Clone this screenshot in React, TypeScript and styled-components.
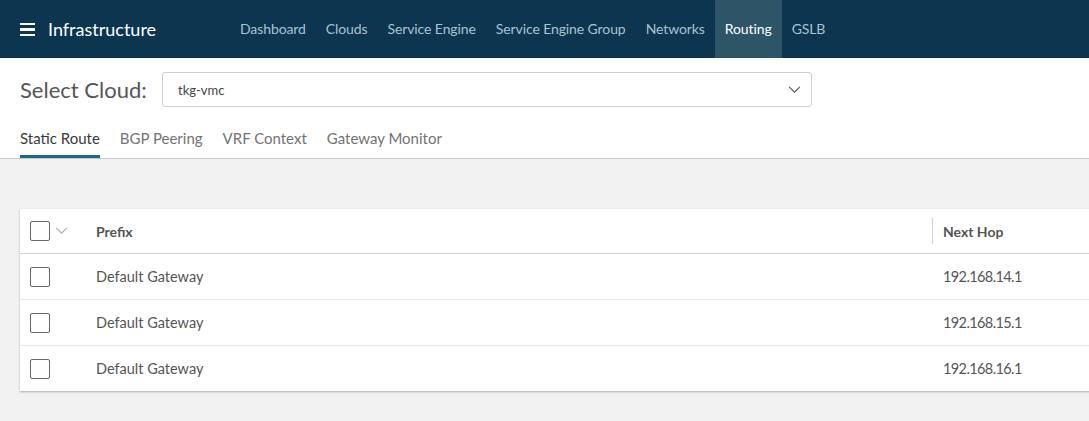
import React from "react";
import styled, { createGlobalStyle } from "styled-components";

const Global = createGlobalStyle`
  html, body { margin: 0; padding: 0; background: #f2f2f2; overflow: hidden; }
  body { font-family: Lato, "Open Sans", sans-serif; }
  * { box-sizing: border-box; }
`;

const Page = styled.div`
  width: 1089px;
  height: 421px;
  overflow: hidden;
  display: flex;
  flex-direction: column;
`;

const Header = styled.header`
  height: 58px;
  background: #0c3550;
  display: flex;
  align-items: stretch;
  flex-shrink: 0;
`;

const Brand = styled.div`
  display: flex;
  align-items: center;
  gap: 13px;
  padding-left: 20px;
  width: 230px;
  color: #fff;
  font-size: 18px;
`;

const Burger = styled.span`
  display: flex;
  flex-direction: column;
  gap: 3px;
  width: 15px;
  margin-top: 1px;
  & > i {
    display: block;
    height: 2.5px;
    background: #fff;
  }
`;

const Nav = styled.nav`
  display: flex;
  align-items: stretch;
`;

const NavItem = styled.a<{ $active?: boolean }>`
  display: flex;
  align-items: center;
  padding: 0 10px 1px;
  font-size: 14px;
  letter-spacing: -0.1px;
  color: ${(p) => (p.$active ? "#ffffff" : "#a9c3d2")};
  background: ${(p) => (p.$active ? "#2d5467" : "transparent")};
`;

const Top = styled.section`
  background: #fff;
  border-bottom: 1px solid #c9c9c9;
  flex-shrink: 0;
`;

const CloudRow = styled.div`
  display: flex;
  align-items: center;
  padding: 14px 20px 0;
  gap: 14px;
`;

const CloudLabel = styled.span`
  font-size: 22px;
  color: #565656;
  width: 128px;
`;

const SelectBox = styled.div`
  width: 650px;
  height: 35px;
  border: 1px solid #cfcfcf;
  border-radius: 3px;
  display: flex;
  align-items: center;
  justify-content: space-between;
  padding: 0 10px 0 15px;
  font-size: 13px;
  color: #444;
`;

const Tabs = styled.div`
  display: flex;
  gap: 20px;
  padding: 22px 20px 0;
`;

const Tab = styled.div<{ $active?: boolean }>`
  font-size: 15px;
  color: ${(p) => (p.$active ? "#3a3a3a" : "#737373")};
  padding-bottom: 8px;
  border-bottom: 3px solid ${(p) => (p.$active ? "#1b6a85" : "transparent")};
`;

const Content = styled.main`
  padding: 50px 0 0 20px;
`;

const Card = styled.div`
  width: 1200px;
  background: #fff;
  box-shadow: 0 1px 2px rgba(0, 0, 0, 0.3);
`;

const Row = styled.div<{ $head?: boolean }>`
  display: grid;
  grid-template-columns: 76px 836px 1fr;
  align-items: center;
  height: ${(p) => (p.$head ? "45px" : "46px")};
  border-bottom: 1px solid ${(p) => (p.$head ? "#cfcfcf" : "#e6e6e6")};
  &:last-child { border-bottom: none; height: 45px; }
  font-size: ${(p) => (p.$head ? "14px" : "14.5px")};
  color: #555;
  font-weight: ${(p) => (p.$head ? 700 : 400)};
`;

const CheckCell = styled.div`
  display: flex;
  align-items: center;
  gap: 5px;
  padding-left: 10px;
`;

const Box = styled.span`
  width: 20px;
  height: 20px;
  border: 1px solid #666;
  border-radius: 2px;
  display: inline-block;
`;

const Cell = styled.div<{ $divider?: boolean; $num?: boolean }>`
  height: 100%;
  display: flex;
  align-items: center;
  padding-left: ${(p) => (p.$num || p.$divider ? "11px" : "0")};
  letter-spacing: ${(p) => (p.$num ? "-0.6px" : "normal")};
  position: relative;
  ${(p) =>
    p.$divider
      ? `&::before { content: ""; position: absolute; left: 0; top: 9px; bottom: 9px; width: 1px; background: #d0d0d0; }`
      : ""}
`;

const Chevron = ({ color, w }: { color: string; w: number }) => (
  <svg width={w} height={w * 0.55} viewBox="0 0 14 8" fill="none">
    <path d="M1 1l6 6 6-6" stroke={color} strokeWidth="1.2" />
  </svg>
);

const rows = [
  { prefix: "Default Gateway", hop: "192.168.14.1" },
  { prefix: "Default Gateway", hop: "192.168.15.1" },
  { prefix: "Default Gateway", hop: "192.168.16.1" },
];

const navItems = ["Dashboard", "Clouds", "Service Engine", "Service Engine Group", "Networks", "Routing", "GSLB"];

export default function App() {
  return (
    <Page>
      <Global />
      <Header>
        <Brand>
          <Burger>
            <i />
            <i />
            <i />
          </Burger>
          Infrastructure
        </Brand>
        <Nav>
          {navItems.map((n) => (
            <NavItem key={n} $active={n === "Routing"}>
              {n}
            </NavItem>
          ))}
        </Nav>
      </Header>
      <Top>
        <CloudRow>
          <CloudLabel>Select Cloud:</CloudLabel>
          <SelectBox>
            tkg-vmc
            <Chevron color="#555" w={13} />
          </SelectBox>
        </CloudRow>
        <Tabs>
          <Tab $active>Static Route</Tab>
          <Tab>BGP Peering</Tab>
          <Tab>VRF Context</Tab>
          <Tab>Gateway Monitor</Tab>
        </Tabs>
      </Top>
      <Content>
        <Card>
          <Row $head>
            <CheckCell>
              <Box />
              <Chevron color="#aaa" w={13} />
            </CheckCell>
            <Cell>Prefix</Cell>
            <Cell $divider>Next Hop</Cell>
          </Row>
          {rows.map((r) => (
            <Row key={r.hop}>
              <CheckCell>
                <Box />
              </CheckCell>
              <Cell>{r.prefix}</Cell>
              <Cell $num>{r.hop}</Cell>
            </Row>
          ))}
        </Card>
      </Content>
    </Page>
  );
}
